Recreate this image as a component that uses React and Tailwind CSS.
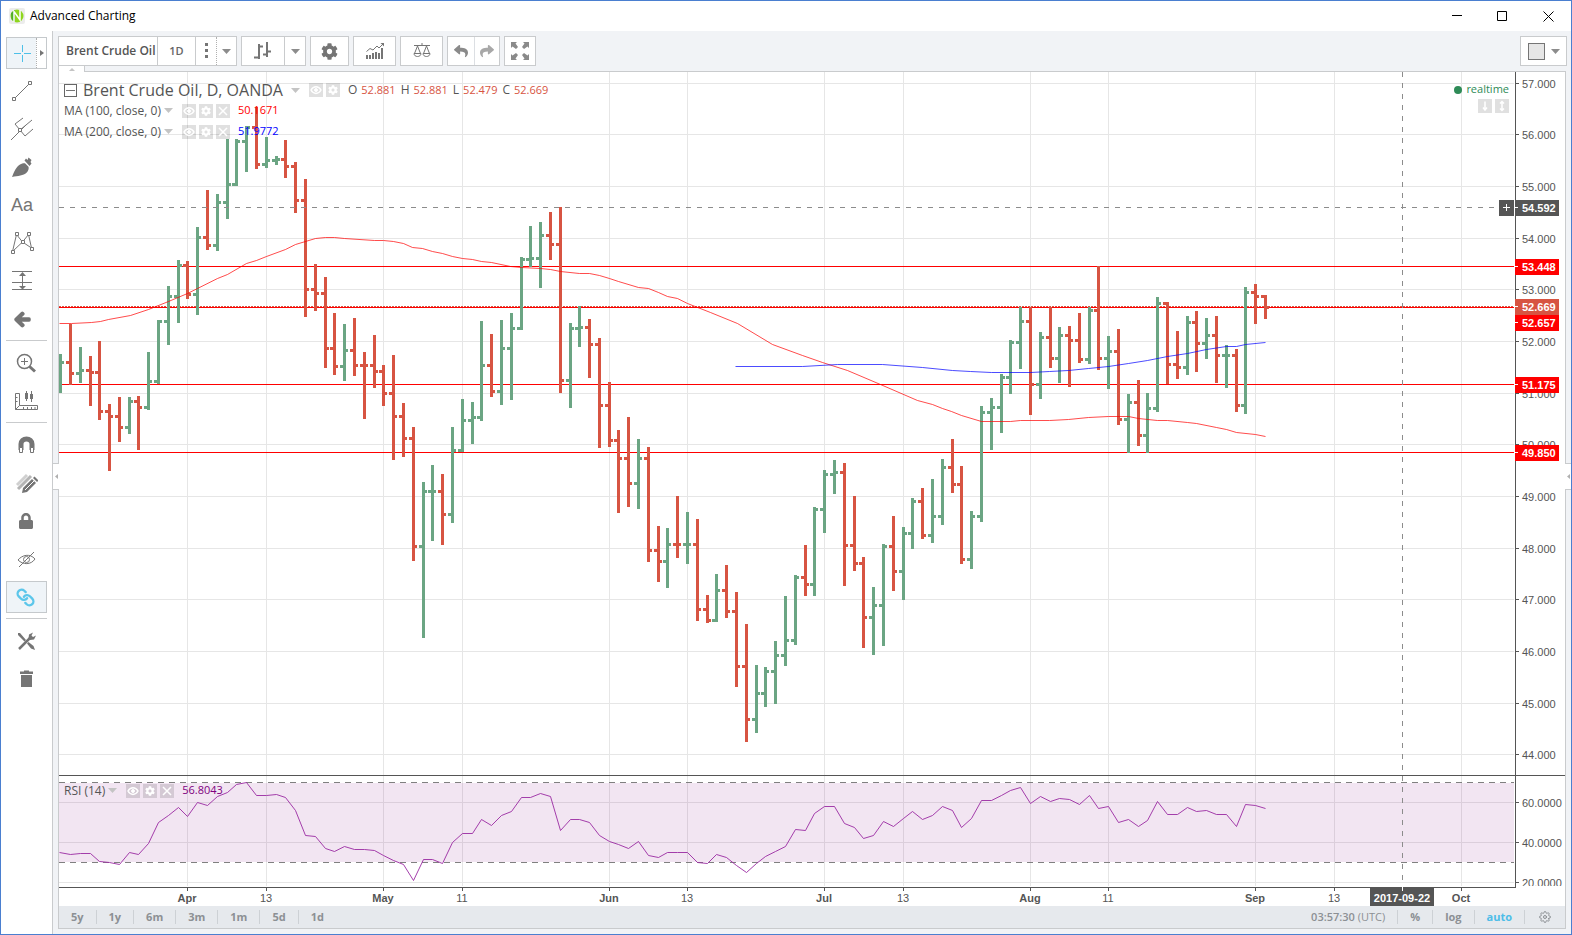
import React, { useState } from "react";
import { FaCog, FaLock, FaReply, FaShare, FaArrowLeft } from "react-icons/fa";
import { FiLink, FiSettings } from "react-icons/fi";

/* =====================
   CHART DATA
   [high, low, close, up] in chart units, open = previous close
===================== */
const BARS = [
  [354, 393, 362, 1], [324, 385, 373, 0], [347, 383, 370, 1], [356, 406, 372, 0], [341, 420, 411, 0],
  [404, 471, 416, 0], [397, 442, 427, 0], [397, 434, 401, 1], [396, 450, 407, 0], [352, 410, 381, 1],
  [320, 384, 321, 1], [286, 345, 296, 1], [260, 323, 265, 1], [261, 299, 294, 0], [227, 315, 237, 1],
  [190, 250, 245, 0], [194, 251, 202, 1], [139, 219, 184, 1], [139, 186, 141, 1], [126, 172, 127, 1],
  [107, 169, 164, 0], [137, 168, 160, 1], [156, 165, 159, 1], [140, 178, 166, 0], [162, 213, 200, 0],
  [179, 317, 289, 0], [264, 311, 293, 0], [277, 368, 348, 0], [313, 375, 366, 0], [324, 381, 350, 1],
  [318, 376, 365, 0], [352, 419, 365, 0], [335, 388, 371, 0], [365, 406, 393, 0], [355, 460, 416, 0],
  [403, 457, 438, 0], [427, 561, 546, 0], [482, 638, 491, 1], [465, 541, 491, 1], [474, 545, 514, 0],
  [427, 523, 450, 1], [399, 452, 420, 1], [402, 444, 417, 1], [321, 421, 365, 1], [334, 397, 391, 0],
  [320, 405, 348, 1], [313, 400, 328, 1], [257, 330, 259, 1], [226, 267, 258, 1], [222, 288, 235, 1],
  [212, 260, 244, 0], [207, 393, 380, 0], [323, 408, 328, 1], [306, 347, 327, 1], [319, 378, 344, 0],
  [338, 448, 405, 0], [382, 447, 440, 0], [430, 513, 458, 0], [417, 507, 483, 0], [439, 509, 458, 1],
  [447, 562, 550, 0], [526, 582, 561, 0], [528, 588, 544, 1], [496, 558, 544, 0], [512, 564, 544, 1],
  [519, 621, 609, 0], [595, 623, 620, 0], [574, 622, 590, 1], [565, 618, 611, 0], [592, 687, 666, 0],
  [624, 742, 719, 0], [665, 733, 693, 1], [667, 707, 671, 1], [641, 704, 655, 1], [596, 666, 640, 1],
  [575, 645, 577, 1], [545, 596, 584, 0], [507, 596, 509, 1], [470, 533, 474, 1], [460, 494, 472, 1],
  [463, 586, 545, 0], [496, 571, 563, 0], [557, 648, 617, 0], [587, 655, 605, 1], [544, 646, 546, 1],
  [516, 591, 571, 0], [527, 600, 533, 1], [498, 549, 501, 1], [488, 539, 535, 0], [479, 543, 516, 1],
  [459, 525, 467, 1], [439, 493, 484, 0], [466, 564, 559, 0], [511, 569, 516, 1], [406, 522, 412, 1],
  [398, 450, 407, 1], [374, 433, 377, 1], [340, 394, 342, 1], [307, 369, 321, 1], [307, 415, 384, 0],
  [332, 399, 337, 1], [307, 368, 358, 0], [327, 383, 335, 1], [326, 387, 340, 0], [313, 363, 359, 0],
  [307, 364, 310, 1], [266, 370, 358, 0], [336, 389, 351, 1], [329, 425, 419, 0], [394, 453, 402, 1],
  [380, 446, 435, 0], [393, 453, 408, 1], [297, 412, 303, 1], [302, 384, 364, 0], [331, 379, 367, 0],
  [316, 375, 322, 1], [311, 372, 343, 0], [318, 359, 335, 1], [316, 383, 355, 0], [345, 388, 355, 1],
  [349, 412, 405, 0], [287, 414, 292, 1], [284, 324, 296, 0], [295, 319, 307, 0],
];

const RSI = [
  852, 854, 853, 853, 861, 862, 864, 852, 854, 843, 822, 815, 807, 816, 802, 805, 796, 792, 784, 782,
  795, 795, 794, 797, 810, 835, 836, 848, 851, 846, 849, 849, 850, 855, 860, 864, 880, 859, 859, 863,
  842, 833, 833, 819, 825, 815, 811, 797, 797, 793, 796, 830, 819, 819, 822, 835, 841, 844, 848, 841,
  855, 857, 852, 852, 852, 862, 863, 854, 857, 865, 872, 863, 856, 851, 846, 829, 830, 813, 806, 806,
  823, 827, 838, 835, 821, 826, 818, 811, 819, 815, 806, 810, 827, 818, 800, 800, 795, 790, 787, 803,
  796, 801, 798, 799, 804, 795, 808, 806, 822, 819, 826, 820, 801, 814, 814, 807, 811, 810, 814, 814,
  826, 804, 805, 808,
];

const MA100 =
  "59,323 71,323 91,322 100,321 108,319 130,315 148,309 168,301 187,293 197,288 217,278 227,274 246,263 256,260 266,256 285,249 295,244 315,238 325,237 334,237 344,238 374,240 383,240 393,241 403,243 412,247 422,248 432,251 442,253 452,256 462,258 472,259 481,261 491,262 510,266 521,267 540,268 550,269 560,271 579,273 589,273 599,275 609,278 618,281 638,287 648,288 658,292 667,296 677,298 687,303 710,312 737,323 772,344 802,355 822,362 847,370 880,384 917,400 932,404 942,408 951,411 961,415 981,421 991,421 1010,421 1020,420 1049,420 1068,419 1088,417 1108,416 1128,416 1138,418 1157,420 1167,420 1187,422 1196,423 1216,427 1226,429 1236,432 1255,434 1265,436";
const MA200 =
  "735,366 802,366 837,364 882,364 922,367 952,370 970,371 991,372 1030,372 1049,371 1068,370 1088,368 1108,366 1128,363 1147,360 1167,356 1187,353 1206,349 1226,346 1236,346 1245,344 1265,342";

const PRICE_TICKS = [
  ["57.000", 83], ["56.000", 134], ["55.000", 186], ["54.000", 238], ["53.000", 289], ["52.000", 341],
  ["51.000", 393], ["50.000", 444], ["49.000", 496], ["48.000", 548], ["47.000", 599], ["46.000", 651],
  ["45.000", 703], ["44.000", 754],
];
const RSI_TICKS = [["60.0000", 802], ["40.0000", 842], ["20.0000", 882]];
const TIME_TICKS = [
  ["Apr", 187], ["13", 266], ["May", 383], ["11", 462], ["Jun", 609], ["13", 687], ["Jul", 824],
  ["13", 903], ["Aug", 1030], ["11", 1108], ["Sep", 1255], ["13", 1334], ["Oct", 1461],
];
const LEVELS = [266, 307, 384, 452];
const TAGS = [
  ["54.592", 207, "#555555"], ["53.448", 266, "#ff0000"], ["52.657", 322, "#ff0000"],
  ["52.669", 306, "#d75442"], ["51.175", 384, "#ff0000"], ["49.850", 452, "#ff0000"],
];

const barX = (i) => Math.floor(60.62 + 9.796 * i);

/* =====================
   ICONS
===================== */
const Icon = ({ w = 24, h = 24, children, className = "text-[#757575]" }) => (
  <svg width={w} height={h} viewBox={`0 0 ${w} ${h}`} fill="none" stroke="currentColor" className={className} aria-hidden="true">
    {children}
  </svg>
);

const Caret = ({ className = "text-[#8c8c8c]" }) => (
  <Icon w={9} h={5} className={className}>
    <path d="M0 0h9L4.500 5z" fill="currentColor" stroke="none" />
  </Icon>
);

const CrossIcon = () => (
  <Icon className="text-[#4dc0e8]">
    <path d="M12.500 4v7M12.500 14v7M4 12.500h7M14 12.500h7" />
  </Icon>
);
const LineIcon = () => (
  <Icon>
    <path d="M4.500 19.500L20 4" />
    <path d="M2.500 18.500h3v3h-3zM18.500 2.500h3v3h-3z" fill="#fff" />
  </Icon>
);
const ForkIcon = () => (
  <Icon>
    <path d="M1 22L16 7M5 6l8-6M5 6l5 6M10 12l5 6M15 18l8-7M10 12L22 2" transform="translate(0 1)" strokeWidth="1" />
    <path d="M8.500 11.500h3v3h-3z" fill="#fff" />
  </Icon>
);
const BrushIcon = () => (
  <Icon>
    <path d="M2 22C4 17 6 12 10 9.500c2-1.200 4-1.500 5-1.200l3.500 3.500c.6 1.500 0 4-2 6C13.500 20.500 8 21 2 22z" fill="currentColor" stroke="none" />
    <path d="M14.500 5.500l1.500-2 1.500 1.500 1-2.500 3 2.500-1 2 1 1.500-2 2.500z" fill="currentColor" stroke="none" />
  </Icon>
);
const PatternIcon = () => (
  <Icon>
    <path d="M2.500 20.500L6.500 3.500L12.500 11L18.500 3.500L21.500 17L12.500 11z" />
    <path d="M1.500 19.500h3v3h-3zM5.500 1.500h3v3h-3zM11.500 9.500h3v3h-3zM17.500 1.500h3v3h-3zM20.500 16.500h3v3h-3z" fill="#fff" />
  </Icon>
);
const RangeIcon = () => (
  <Icon>
    <path d="M2 2.500h20M2 13.500h20M2 20.500h20M12.500 4v15" />
    <path d="M9 7l3.500-4L16 7zM9 17l3.500 3.500L16 17z" fill="currentColor" stroke="none" />
  </Icon>
);
const ZoomIcon = () => (
  <Icon>
    <circle cx="10.500" cy="10.500" r="7" strokeWidth="1.500" />
    <path d="M7 10.500h7M10.500 7v7" />
    <path d="M15.500 15.500l5.500 5" strokeWidth="3" />
  </Icon>
);
const RulerIcon = () => (
  <Icon w={26}>
    <path d="M2.500 4.500h4v12h18v4h-22zM2.500 8.500h2M2.500 12.500h2M10.500 20v-2M14.500 20v-2M18.500 20v-2M22 20v-2M2.500 20.500l4-4" />
    <path d="M13.500 2v10M18.500 2v11" />
    <path d="M12 4h3v6h-3zM17 5h3v5h-3z" fill="currentColor" stroke="none" />
  </Icon>
);
const MagnetIcon = () => (
  <Icon>
    <path d="M7 17v-6a5.500 5 0 0 1 11 0v6" strokeWidth="5" />
    <path d="M5.500 14.500h3v5h-3zM16.500 14.500h3v5h-3z" fill="#fff" />
  </Icon>
);
const PencilsIcon = () => (
  <Icon>
    <path d="M3 14L13 4" stroke="#d0d0d0" strokeWidth="3" />
    <path d="M4 18L17 5" stroke="#b4b4b4" strokeWidth="3" />
    <path d="M8 22l1-5 9-9 4 4-9 9z" fill="currentColor" stroke="none" />
    <path d="M19 7l1.500-1.500 4 4L23 11z" fill="currentColor" stroke="none" />
    <path d="M11 19l9-9" stroke="#fff" strokeWidth="1" />
  </Icon>
);
const EyeOffIcon = () => (
  <Icon>
    <path d="M4 13c4-5 12-7 17-1-4 6-12 6-17 1z" />
    <circle cx="12.500" cy="12.500" r="3" />
    <path d="M5 20L20 5" />
  </Icon>
);
const ToolsIcon = () => (
  <Icon>
    <path d="M5 20L17 8" strokeWidth="2.500" />
    <path d="M15 5.500l4-2-1.500 3 1.500 1.500 3-1.500-2 4-4 .5-1.500-1.500z" fill="currentColor" stroke="none" />
    <path d="M4 4l2 0 6 7-1.500 1.500-6.500-6.500zM13 14.500l1.500-1.500 5 4 1.500 4-4-1.500z" fill="currentColor" stroke="none" />
  </Icon>
);
const TrashIcon = () => (
  <Icon>
    <path d="M6 4.500h4v-1h5v1h4V7H6zM7 8h11v12H7z" fill="currentColor" stroke="none" />
  </Icon>
);

const BarsIcon = () => (
  <Icon w={18} h={18}>
    <path d="M0 15.500h4M5 2v15M5 4.500h4M9 12.500h4M13 0v15M13 9.500h4" strokeWidth="2" />
  </Icon>
);
const IndicatorIcon = () => (
  <Icon w={18} h={16}>
    <path d="M1 12v4M4 12v4M7 10v6M10 9v7M13 10v6M16 5v11" strokeWidth="2" />
    <path d="M.500 8.500L4 5.500l3 1.500 4-4 2 2L17 1" />
    <path d="M14.500 0H18v3.500z" fill="currentColor" stroke="none" />
  </Icon>
);
const ScalesIcon = () => (
  <Icon w={18} h={16}>
    <path d="M1 2.500h16M9 0v2M4.500 3L1.500 10.500M4.500 3l3 7.500M13.500 3l-3 7.500M13.500 3l3 7.500" />
    <path d="M1 10.500h7c0 4-7 4-7 0zM10 10.500h7c0 4-7 4-7 0z" />
  </Icon>
);
const FullIcon = () => (
  <Icon w={18} h={18} className="text-[#8a8a8a]">
    <path d="M0 0h6L4.500 1.500 7 5 5 7 1.500 4.500 0 6zM18 0v6l-1.500-1.500L13 7l-2-2 2.500-3.500L12 0zM0 18v-6l1.500 1.500L5 11l2 2-2.500 3.500L6 18zM18 18h-6l1.500-1.500L11 13l2-2 3.500 2.500L18 12z" fill="currentColor" stroke="none" />
  </Icon>
);

/* =====================
   LEGEND
===================== */
const MiniButton = ({ kind, label }) => (
  <button aria-label={label} className="flex size-[14px] items-center justify-center bg-black/12 text-white">
    {kind === "cog" ? (
      <FaCog size={10} />
    ) : (
      <Icon w={12} h={12} className="text-white">
        {kind === "eye" && (
          <>
            <path d="M1 6c2.500-4.500 7.500-4.500 10 0-2.500 4.500-7.500 4.500-10 0z" strokeWidth="1.500" />
            <circle cx="6" cy="6" r="1.500" fill="currentColor" />
          </>
        )}
        {kind === "x" && <path d="M2 2l8 8M10 2l-8 8" strokeWidth="1.500" />}
        {kind === "down" && <path d="M6 1.500v8M4 7.500l2 2.500 2-2.500" strokeWidth="1.500" />}
        {kind === "updown" && <path d="M6 1.500v9M4 3.500l2-2 2 2M4 8.500l2 2 2-2" strokeWidth="1.500" />}
      </Icon>
    )}
  </button>
);

const Study = ({ name, value, color }) => (
  <div className="flex h-[21px] items-center">
    <span>{name}</span>
    <Caret className="ml-[3px] text-[#c4c4c4]" />
    <div className="ml-[9px] flex gap-[3px]">
      <MiniButton kind="eye" label={`Hide ${name}`} />
      <MiniButton kind="cog" label={`Format ${name}`} />
      <MiniButton kind="x" label={`Remove ${name}`} />
    </div>
    <span className={`ml-2 text-[11px] ${color}`}>{value}</span>
  </div>
);

const Ohlc = ({ k, v }) => (
  <span className="flex items-center gap-1">
    {k} <span className="text-[11px] text-[#d75442]">{v}</span>
  </span>
);

/* =====================
   CHART
===================== */
const Plot = () => (
  <svg className="block h-full w-full" fontFamily='"Liberation Sans", Arial, sans-serif' fontSize="11">
    <g transform="translate(-59 -72)">
      <g stroke="#e6e6e6">
        {TIME_TICKS.map(([, x]) => <path key={x} d={`M${x + 0.5} 72V886`} />)}
        {[...PRICE_TICKS, ...RSI_TICKS].map(([, y]) => <path key={y} d={`M59 ${y + 0.5}H1514`} />)}
      </g>

      <g stroke="#ff0000">
        {LEVELS.map((y) => <path key={y} d={`M59 ${y + 0.5}H1514`} />)}
      </g>
      <path d="M59 306.500H1514" stroke="#d75442" strokeDasharray="2 1" />

      {/* OHLC bars */}
      {BARS.map(([high, low, close, up], i) => {
        const x = barX(i);
        return (
          <g key={i} fill={up ? "#6ba583" : "#d75442"}>
            <rect x={x - 1} y={high} width="3" height={low - high} />
            <rect x={x + 2} y={close - 1} width="2" height="3" />
            {i > 0 && <rect x={x - 4} y={BARS[i - 1][2] - 1} width="3" height="3" />}
          </g>
        );
      })}
      <polyline points={MA100} fill="none" stroke="#ff0000" strokeOpacity="0.7" transform="translate(0.5 0.5)" />
      <polyline points={MA200} fill="none" stroke="#0000ff" strokeOpacity="0.7" transform="translate(0.5 0.5)" />

      {/* RSI pane */}
      <rect x="59" y="783" width="1455" height="79" fill="#800080" fillOpacity="0.1" />
      <path d="M59 782.500H1514M59 862.500H1514" stroke="#808080" strokeDasharray="6 5" />
      <polyline
        points={RSI.map((y, i) => `${i === 0 ? 59 : barX(i)},${y}`).join(" ")}
        fill="none" stroke="#9a2aa2" strokeOpacity="0.9" transform="translate(0.5 0.5)"
      />

      {/* Crosshair */}
      <path d="M59 207.500H1499M1402.500 72V886" stroke="#8c8c8c" strokeDasharray="5 6" />
      <rect x="1499" y="200" width="15" height="16" fill="#555" />
      <path d="M1503 207.500h7M1506.500 204v7" stroke="#fff" />

      <path d="M59 775.500H1515M59 887.500H1515" stroke="#555" />
      {TIME_TICKS.map(([label, x]) => (
        <g key={x}>
          <path d={`M${x + 0.5} 888v3`} stroke="#555" />
          <text x={x} y="902" textAnchor="middle" fill="#555" fontWeight={isNaN(label) ? 700 : 400}>{label}</text>
        </g>
      ))}
      <rect x="1370" y="887" width="64" height="19" fill="#555" />
      <path d="M1402.500 887v4" stroke="#fff" />
      <text x="1402" y="902" textAnchor="middle" fill="#fff" fontWeight="700">2017-09-22</text>
    </g>
  </svg>
);

const PriceAxis = () => (
  <svg className="block h-full w-[50px] shrink-0" fontFamily='"Liberation Sans", Arial, sans-serif' fontSize="11">
    <g transform="translate(-1515 -72)">
      {[...PRICE_TICKS, ...RSI_TICKS].map(([label, y]) => (
        <g key={label}>
          <path d={`M1516 ${y + 0.5}h3`} stroke="#555" />
          <text x="1522" y={y + 5} fill="#555">{label}</text>
        </g>
      ))}
      <rect x="1516" y="886" width="49" height="20" fill="#fff" />
      <path d="M1515.500 72V888M1515 775.500h50" stroke="#555" />
      {TAGS.map(([label, y, color]) => (
        <g key={label}>
          <rect x="1515" y={y - 7} width="44" height="16" fill={color} />
          <path d={`M1515 ${y + 0.5}h3`} stroke="#fff" />
          <text x="1522" y={y + 5} fill="#fff" fontWeight="700">{label}</text>
        </g>
      ))}
    </g>
  </svg>
);

/* =====================
   TOOLBARS
===================== */
const TOOLS = [
  ["Trend line", <LineIcon />],
  ["Pitchfork", <ForkIcon />],
  ["Brush", <BrushIcon />],
  ["Text", <span className="font-['Liberation_Sans',Arial,sans-serif] text-lg text-[#757575]">Aa</span>],
  ["Pattern", <PatternIcon />],
  ["Prediction", <RangeIcon />],
  ["Arrow", <FaArrowLeft size={17} stroke="currentColor" strokeWidth="50" className="overflow-visible" />],
];

const SideButton = ({ label, narrow, active, children }) => (
  <button
    aria-label={label}
    className={`mb-[6px] flex h-8 shrink-0 items-center justify-center text-[#757575] ${narrow ? "w-8" : "w-full pr-[2px]"} ${active ? "border border-[#c5c9cc] bg-[#eff4f8]" : ""}`}
  >
    {children}
  </button>
);

const Divider = () => <div className="-mt-px mb-[6px] h-px shrink-0 bg-[#c9cbcd]" />;

const Sidebar = () => (
  <aside className="flex w-[52px] shrink-0 flex-col border-r border-[#c9cbcd] bg-white pt-[6px] pr-[5px] pl-[5px]">
    <div className="mb-[6px] flex h-8 shrink-0 border border-[#c5c9cc]">
      <button aria-label="Cross" className="flex flex-1 items-center justify-center bg-[#eff4f8]"><CrossIcon /></button>
      <button aria-label="More cursors" className="flex w-[10px] items-center justify-center border-l border-dotted border-[#b0b0b0]">
        <Icon w={4} h={6}><path d="M0 0l4 3-4 3z" fill="currentColor" stroke="none" /></Icon>
      </button>
    </div>
    {TOOLS.map(([label, icon]) => <SideButton key={label} label={label} narrow>{icon}</SideButton>)}
    <Divider />
    <SideButton label="Zoom in"><ZoomIcon /></SideButton>
    <SideButton label="Measure"><RulerIcon /></SideButton>
    <Divider />
    <SideButton label="Magnet"><MagnetIcon /></SideButton>
    <SideButton label="Stay in drawing mode"><PencilsIcon /></SideButton>
    <SideButton label="Lock drawings"><FaLock size={16} /></SideButton>
    <SideButton label="Hide drawings"><EyeOffIcon /></SideButton>
    <SideButton label="Link" active><FiLink size={19} strokeWidth={3} className="-scale-x-100 text-[#5cc6ea]" /></SideButton>
    <Divider />
    <SideButton label="Tools"><ToolsIcon /></SideButton>
    <SideButton label="Remove"><TrashIcon /></SideButton>
  </aside>
);

const Group = ({ children }) => (
  <div className="flex h-[30px] border border-[#c9cbcd] bg-white text-[#757575]">{children}</div>
);
const TopButton = ({ label, className, children }) => (
  <button aria-label={label} className={`flex items-center justify-center ${className}`}>{children}</button>
);

const TopBar = ({ symbol, setSymbol }) => (
  <div className="flex h-[40px] shrink-0 items-start gap-1 pt-[5px] pr-1 pl-[5px]">
    <Group>
      <input
        aria-label="Symbol"
        value={symbol}
        onChange={(e) => setSymbol(e.target.value)}
        className="w-[98px] pl-[7px] text-xs font-semibold text-[#555] outline-none"
      />
      <TopButton label="Interval" className="w-[38px] border-l border-[#c9cbcd] text-[11px] font-semibold text-[#666]">1D</TopButton>
      <TopButton label="Intervals" className="w-[21px] border-l border-[#c9cbcd]">
        <Icon w={3} h={16}><path d="M0 0h3v3H0zM0 6h3v3H0zM0 12h3v3H0z" fill="currentColor" stroke="none" /></Icon>
      </TopButton>
      <TopButton label="More intervals" className="w-5 border-l border-dotted border-[#b0b0b0]"><Caret /></TopButton>
    </Group>
    <Group>
      <TopButton label="Bars" className="w-[42px]"><BarsIcon /></TopButton>
      <TopButton label="Chart style" className="w-[21px] border-l border-[#c9cbcd]"><Caret /></TopButton>
    </Group>
    <Group><TopButton label="Properties" className="w-[37px]"><FaCog size={17} /></TopButton></Group>
    <Group><TopButton label="Indicators" className="w-[41px]"><IndicatorIcon /></TopButton></Group>
    <Group><TopButton label="Compare" className="w-[41px]"><ScalesIcon /></TopButton></Group>
    <Group>
      <TopButton label="Undo" className="w-[26px] text-[#8a8a8a]"><FaReply size={14} /></TopButton>
      <TopButton label="Redo" className="w-[25px] border-l border-[#dcdfe3] text-[#a8a8a8]"><FaShare size={14} /></TopButton>
    </Group>
    <Group><TopButton label="Full screen" className="w-[30px]"><FullIcon /></TopButton></Group>
    <div className="ml-auto">
      <Group>
        <TopButton label="Layout" className="w-[45px] gap-[6px]">
          <span className="size-[17px] border border-[#757575] bg-[#e6e6e6]" />
          <Caret />
        </TopButton>
      </Group>
    </div>
  </div>
);

const RangeButton = ({ children, last }) => (
  <button className={`h-[14px] px-3 leading-[14px] ${last ? "" : "border-r border-[#cdd1d5]"}`}>{children}</button>
);

const App = () => {
  const [symbol, setSymbol] = useState("Brent Crude Oil");

  return (
    <div className="flex h-screen flex-col overflow-hidden border border-[#4a7fd0] bg-[#f1f3f6] font-['Open_Sans',sans-serif]">
      {/* Title bar */}
      <header className="flex h-[30px] shrink-0 items-center bg-white pl-2 text-black">
        <svg width="16" height="16" viewBox="0 0 16 16" aria-hidden="true">
          <rect width="16" height="16" rx="2" fill="#ececec" />
          <circle cx="8" cy="8" r="6.500" fill="#8fd61e" />
          <path d="M2 5L6 2v12L2.500 11.500z" fill="#4fae2a" />
          <path d="M5 14V3.500L11 12V2" fill="none" stroke="#fff" strokeWidth="1.500" />
        </svg>
        <h1 className="ml-[5px] text-xs">Advanced Charting</h1>
        <div className="ml-auto flex">
          <button aria-label="Minimize" className="flex h-[30px] w-[45px] items-center justify-center"><Icon w={11} h={11} className="text-black"><path d="M0 4.500h10" /></Icon></button>
          <button aria-label="Maximize" className="flex h-[30px] w-[45px] items-center justify-center"><Icon w={11} h={11} className="text-black"><path d="M.500.500h9v9h-9z" /></Icon></button>
          <button aria-label="Close" className="flex h-[30px] w-[46px] items-center justify-center"><Icon w={11} h={11} className="text-black"><path d="M.500.500l10 10M10.500.500l-10 10" /></Icon></button>
        </div>
      </header>

      <div className="flex min-h-0 flex-1">
        <Sidebar />
        <main className="relative flex min-w-0 flex-1 flex-col pb-[5px]">
          <TopBar symbol={symbol} setSymbol={setSymbol} />
          <button aria-label="Hide toolbar" className="absolute top-[35px] left-[5px] flex h-[6px] w-[27px] items-center justify-center border-x border-[#c9cbcd] bg-white">
            <Icon w={6} h={3} className="text-[#c4c4c4]"><path d="M0 3l3-3 3 3z" fill="currentColor" stroke="none" /></Icon>
          </button>
          <button aria-label="Hide tools" className="absolute top-[432px] left-0 flex h-[27px] w-[6px] items-center justify-center border-y border-[#c9cbcd] bg-white">
            <Icon w={3} h={5} className="text-[#b0b0b0]"><path d="M3 0v5L0 2.500z" fill="currentColor" stroke="none" /></Icon>
          </button>
          <button aria-label="Show panel" className="absolute top-[432px] right-0 flex h-[27px] w-[6px] items-center justify-center border-y border-[#c9cbcd] bg-white">
            <Icon w={3} h={5} className="text-[#b0b0b0]"><path d="M3 0v5L0 2.500z" fill="currentColor" stroke="none" /></Icon>
          </button>

          <section className="mr-[5px] ml-[5px] flex min-h-0 flex-1 flex-col border border-[#c9cbcd] bg-white">
            <div className="flex min-h-0 flex-1">
              <div className="relative min-w-0 flex-1 overflow-hidden text-xs text-[#555]">
                <Plot />
                <div className="absolute top-[8px] left-[5px]">
                  <div className="flex h-5 items-center">
                    <button aria-label="Collapse legend" className="flex size-[13px] items-center justify-center border border-[#666]">
                      <Icon w={9} h={1}><path d="M0 .500h9" /></Icon>
                    </button>
                    <h2 className="ml-[6px] text-base">Brent Crude Oil, D, OANDA</h2>
                    <Caret className="ml-2 text-[#c4c4c4]" />
                    <div className="ml-[9px] flex gap-[3px]">
                      <MiniButton kind="eye" label="Hide series" />
                      <MiniButton kind="cog" label="Format series" />
                    </div>
                    <div className="ml-2 flex gap-[5px]">
                      <Ohlc k="O" v="52.881" />
                      <Ohlc k="H" v="52.881" />
                      <Ohlc k="L" v="52.479" />
                      <Ohlc k="C" v="52.669" />
                    </div>
                  </div>
                  <Study name="MA (100, close, 0)" value="50.1671" color="text-[#ff0000]" />
                  <Study name="MA (200, close, 0)" value="51.9772" color="text-[#0000ff]" />
                </div>
                <div className="absolute top-[708px] left-[5px]">
                  <Study name="RSI (14)" value="56.8043" color="text-[#800080]" />
                </div>
                <div className="absolute top-[8px] right-[6px] flex flex-col items-end">
                  <span className="flex h-[19px] items-center gap-1 text-[11px] text-[#2e8b57]">
                    <span className="size-2 rounded-full bg-[#2e8b57]" />
                    realtime
                  </span>
                  <div className="flex gap-[3px]">
                    <MiniButton kind="down" label="Move down" />
                    <MiniButton kind="updown" label="Maximize pane" />
                  </div>
                </div>
              </div>
              <PriceAxis />
            </div>

            {/* Bottom bar */}
            <div className="flex h-[22px] shrink-0 items-center bg-[#e6e9ed] text-[11px] font-bold text-[#8c9094]">
              {["5y", "1y", "6m", "3m", "1m", "5d"].map((r) => <RangeButton key={r}>{r}</RangeButton>)}
              <RangeButton last>1d</RangeButton>
              <div className="ml-auto flex items-center">
                <RangeButton><span className="font-semibold">03:57:30</span> <span className="font-normal">(UTC)</span></RangeButton>
                <RangeButton>%</RangeButton>
                <RangeButton>log</RangeButton>
                <RangeButton><span className="text-[#4dbde8]">auto</span></RangeButton>
                <button aria-label="Scale settings" className="px-[14px]"><FiSettings size={12} /></button>
              </div>
            </div>
          </section>
        </main>
      </div>
    </div>
  );
};

export default App;
